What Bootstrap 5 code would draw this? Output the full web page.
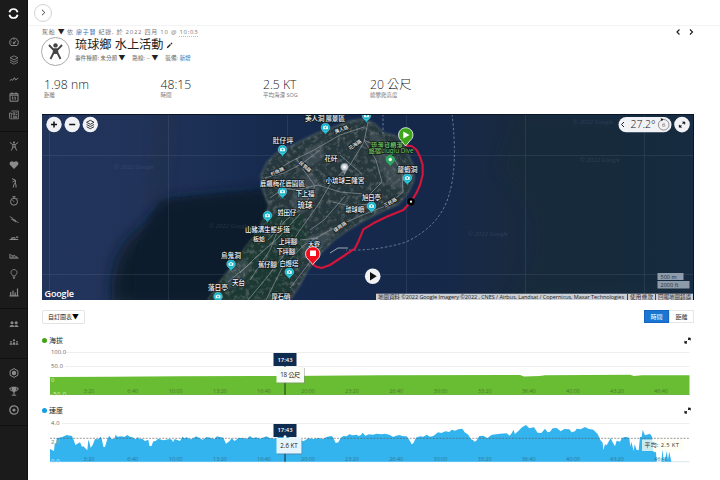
<!DOCTYPE html>
<html lang="zh-Hant">
<head>
<meta charset="utf-8">
<meta name="viewport" content="width=device-width, initial-scale=1">
<title>琉球鄉 水上活動</title>
<link href="https://cdn.jsdelivr.net/npm/bootstrap@5.3.0/dist/css/bootstrap.min.css" rel="stylesheet">
<style>
body{font-family:"Open Sans","Noto Sans CJK TC",sans-serif;font-size:6px;line-height:1;color:#333;width:720px;height:480px;overflow:hidden;background:#fff}
svg{display:block;flex:none}
svg text{font-family:"Open Sans","Noto Sans CJK TC",sans-serif}
.side{width:28px;height:480px;background:#1b1b1b;border-right:1px solid #111}
.side .brand{height:26px}
.side .grp{border-bottom:1px solid #101010;padding:5.5px 0 6.5px}
.side .first-grp{padding-top:7px}
.side .ico{height:18.25px}
.side svg{stroke:#8b8b8b;fill:none;stroke-width:1}
.side .solid{fill:#8b8b8b;stroke:none}
.topbar{height:26px;border-bottom:1px solid #f3f3f3;padding-left:6px}
.round-btn{width:18px;height:18px;border:1px solid #d4d4d4;border-radius:50%}
.body-col{padding:0 26px 0 14px}
.crumb{height:11px;color:#777;letter-spacing:.74px;white-space:nowrap}
.crumb u{text-decoration:none;border-bottom:1px dotted #bbb}
.crumb a,.meta a{color:#2f6db5;text-decoration:none}
.avatar{width:29px;height:29px;border:1px solid #aaa;border-radius:50%;margin-left:-1px}
.head{height:29px;gap:5px}
.head h1{font-size:12.2px;font-weight:400;line-height:16px;color:#222;margin:0;white-space:nowrap}
.meta{font-size:5.6px;color:#666;height:11px;gap:7px;white-space:nowrap}
.tri{font-size:6.8px;line-height:5px;color:#222;letter-spacing:0}
.stats{height:48px;padding:12px 0 0 2px}
.stat-v{font-size:12.2px;font-weight:300;line-height:13px;color:#222;white-space:nowrap}
.stat-l{font-size:5.5px;line-height:8px;color:#777}
.mapbox{height:186px;width:652px}
.tools{height:33px}
.pick{width:43px;height:14px;border:1px solid #e4e4e4;border-radius:2px;font-size:6px;color:#222}
.seg div{width:25px;height:13px;font-size:6px;border:1px solid #e6e6e6}
.seg .on{background:#1976d2;border-color:#1565c0;color:#fff}
.ttl{height:14px;font-size:7px;color:#222;padding-right:3px}
.dot{width:5px;height:5px;border-radius:50%;margin-right:2px}
.green{background:#43a316}.blue{background:#149fe2}
</style>
<script src="https://cdn.jsdelivr.net/npm/bootstrap@5.3.0/dist/js/bootstrap.bundle.min.js"></script>
</head>
<body>
<div class="d-flex">
<nav class="side flex-shrink-0">
  <div class="brand d-flex align-items-center justify-content-center"><svg width="11" height="11" viewBox="0 0 11 11" style="stroke:#fff;stroke-width:1.7"><path d="M1.4 4.3A4.2 4.2 0 0 1 9.6 4.3M1.4 6.7A4.2 4.2 0 0 0 9.6 6.7"/></svg></div>
  <div class="grp first-grp">
    <div class="ico d-flex align-items-center justify-content-center"><svg width="10" height="10" viewBox="0 0 10 10"><path d="M2 8.5A4.3 4.3 0 1 1 8 8.5ZM5 6.3L7 3.6M2.3 5H3M5 2.2V3"/><circle cx="5" cy="6" r=".8"/></svg></div>
    <div class="ico d-flex align-items-center justify-content-center"><svg width="10" height="10" viewBox="0 0 10 10" style="stroke-width:.8"><path d="M5 .8L9 2.8 5 4.8 1 2.8ZM1 5L5 7 9 5M1 7.1L5 9.2 9 7.1"/></svg></div>
    <div class="ico d-flex align-items-center justify-content-center"><svg width="10" height="10" viewBox="0 0 10 10"><path d="M.8 6.6L2.5 5.4 3.5 6.4 5.4 3.7 6.6 5.9 9.2 4.2"/></svg></div>
    <div class="ico d-flex align-items-center justify-content-center"><svg width="10" height="10" viewBox="0 0 10 10"><path d="M1 1.7H9V9.2H1ZM1 3.2H9M3 .3V2.5M7 .3V2.5M3.8 5V7.8M6.2 5V7.8M3 5H4M5.5 5H6.4"/></svg></div>
    <div class="ico d-flex align-items-center justify-content-center"><svg width="10" height="10" viewBox="0 0 10 10" style="stroke-width:.8"><path d="M2.3 1H9.4V8.8H1.5Q.5 8.8.5 7.8V3H2.3V8M4 2.8H5.8V4.7H4ZM6.7 2.8H8.3M6.7 4.5H8.3M4 6.2H8.3M4 7.4H8.3"/></svg></div>
  </div>
  <div class="grp">
    <div class="ico d-flex align-items-center justify-content-center"><svg width="10" height="10" viewBox="0 0 10 10"><circle cx="5" cy="1.6" r="1" class="solid"/><path d="M.8 1.4L3.4 3.4H6.6L9.2 1.4M3.9 3.5V6L2.3 9.5M6.1 3.5V6L7.7 9.5M4 6H6"/></svg></div>
    <div class="ico d-flex align-items-center justify-content-center"><svg width="10" height="10" viewBox="0 0 10 10"><path class="solid" d="M5 9L1.1 5.1C-.7 2.5 2.8-.4 5 2.3 7.2-.4 10.7 2.5 8.9 5.1Z"/></svg></div>
    <div class="ico d-flex align-items-center justify-content-center"><svg width="10" height="10" viewBox="0 0 10 10"><path d="M3 .7L6.5 2.2V4.500L5 6.500 4.200 9.500M6 4.500L7 7V9.500M6.200 2.500L3.500 4"/></svg></div>
    <div class="ico d-flex align-items-center justify-content-center"><svg width="10" height="10" viewBox="0 0 10 10"><circle cx="5" cy="5.700" r="3.500"/><path d="M3.500.7H6.500M5 .7V2M5 5.800L3.600 4.300M8 2.200L8.700 2.900"/></svg></div>
    <div class="ico d-flex align-items-center justify-content-center"><svg width="10" height="10" viewBox="0 0 10 10"><path d="M.8 2.500L4 4.500 6.200 7 9.500 8.600M3.500 5.500L7 6.500M2 4.800L7 8" style="stroke-width:.8"/></svg></div>
    <div class="ico d-flex align-items-center justify-content-center"><svg width="10" height="10" viewBox="0 0 10 10"><path d="M.6 6.500H9.200M2 5.400L5 4.600 6.500 5.500M7 4.200H9.200" style="stroke-width:1.200"/></svg></div>
    <div class="ico d-flex align-items-center justify-content-center"><svg width="10" height="10" viewBox="0 0 10 10"><path d="M.8 2.800V7.300H9.200Q9.400 6.200 7 5.700L5 4 3.500 5 1 3.500M1 6.200H8M3.500 4.500L4.500 6" style="stroke-width:.8"/></svg></div>
    <div class="ico d-flex align-items-center justify-content-center"><svg width="10" height="10" viewBox="0 0 10 10" style="stroke-width:.9"><path d="M3.700 7V6.300C.5 3.800 2.300.6 5 .6S9.500 3.800 6.300 6.300V7ZM3.900 8.300H6.100M4.200 9.400H5.800"/></svg></div>
    <div class="ico d-flex align-items-center justify-content-center"><svg width="10" height="10" viewBox="0 0 10 10"><path d="M.5 8.900H9.500M1.700 5V8.500M4 3.500V8.500M6.200 5.500V8.500M8.500 1.500V8.500" style="stroke-width:1.200"/></svg></div>
  </div>
  <div class="grp">
    <div class="ico d-flex align-items-center justify-content-center"><svg width="10" height="10" viewBox="0 0 10 10"><g class="solid"><circle cx="3" cy="3.800" r="1.500"/><circle cx="7.200" cy="3.800" r="1.500"/><path d="M.4 8Q.5 5.900 3 5.900T4.900 8ZM5.300 8Q5.200 5.900 7.200 5.900T9.600 8Z"/></g></svg></div>
    <div class="ico d-flex align-items-center justify-content-center"><svg width="10" height="10" viewBox="0 0 10 10"><g class="solid"><circle cx="5" cy="3.300" r="1.100"/><circle cx="2" cy="4.800" r=".9"/><circle cx="8" cy="4.800" r=".9"/><path d="M.5 7.800Q.6 6 2 6T3.300 7.800ZM3.600 7.800Q3.500 5 5 5T6.400 7.800ZM6.700 7.800Q6.600 6 8 6T9.500 7.800Z"/></g></svg></div>
  </div>
  <div class="grp">
    <div class="ico d-flex align-items-center justify-content-center"><svg width="10" height="10" viewBox="0 0 10 10"><path d="M5 .6L8.900 2.800V7.200L5 9.400 1.100 7.200V2.800Z"/><circle cx="5" cy="5" r="2.200" class="solid"/></svg></div>
    <div class="ico d-flex align-items-center justify-content-center"><svg width="10" height="10" viewBox="0 0 10 10"><path d="M2.500 2H.8Q.8 4.800 3.200 5M7.500 2H9.200Q9.200 4.800 6.800 5M5 5V9M2.800 9.200H7.200"/><path class="solid" d="M2.500.7H7.500Q7.500 6 5 6.400 2.500 6 2.500.7Z"/></svg></div>
    <div class="ico d-flex align-items-center justify-content-center"><svg width="10" height="10" viewBox="0 0 10 10" style="stroke-width:1.300"><circle cx="5" cy="5" r="4.200"/><circle cx="5" cy="5" r="1.600" class="solid"/></svg></div>
  </div>
</nav>

<main class="flex-grow-1">
  <div class="topbar d-flex align-items-center"><div class="round-btn d-flex align-items-center justify-content-center"><svg width="5" height="7" viewBox="0 0 5 7"><path d="M1 .8L3.800 3.500 1 6.200" fill="none" stroke="#444"/></svg></div></div>
  <div class="body-col">
    <div class="crumb d-flex align-items-center justify-content-between">
      <div>駕船 <span class="tri">▼</span> 依 <a href="#">廖子賢</a> 紀錄, 於 2022 四月 10 @ <u>10:03</u></div>
      <svg width="18" height="8" viewBox="0 0 18 8"><path d="M3.500 1.500L1 4 3.500 6.500M14 1.500L16.500 4 14 6.500" fill="none" stroke="#222" stroke-width="1.200"/></svg>
    </div>
    <div class="head d-flex">
      <div class="avatar d-flex align-items-center justify-content-center flex-shrink-0"><svg width="19" height="20" viewBox="0 0 19 20"><circle cx="9.500" cy="3.400" r="2.200" fill="#444"/><path d="M3 3L7 7.300H12L16 3M8 8L7.500 11 4.500 17M11 8L11.500 11 14.500 17" fill="none" stroke="#444" stroke-width="1.900"/><path d="M7 7H12V12H7Z" fill="#444"/></svg></div>
      <div>
        <h1 class="d-flex align-items-center">琉球鄉 水上活動<svg width="7" height="7" viewBox="0 0 7 7" style="margin-left:3px"><path d="M1.200 5.800L4.500 2.500M5 2L6 1" stroke="#222" stroke-width="1.400"/></svg></h1>
        <div class="meta d-flex align-items-center"><span>事件種類: 未分類 <span class="tri">▼</span></span><span>路線: -- <span class="tri">▼</span></span><span>裝備: <a href="#">新增</a></span></div>
      </div>
    </div>
    <div class="stats d-flex">
      <div style="width:116.500px"><div class="stat-v">1.98 nm</div><div class="stat-l">距離</div></div>
      <div style="width:102.500px"><div class="stat-v">48:15</div><div class="stat-l">時間</div></div>
      <div style="width:107px"><div class="stat-v">2.5 KT</div><div class="stat-l">平均海浬 SOG</div></div>
      <div><div class="stat-v">20 公尺</div><div class="stat-l">總攀爬高度</div></div>
    </div>

    <div class="mapbox">
    <svg width="652" height="186" viewBox="42 114 652 186">
      <defs>
        <linearGradient id="sea"><stop offset="0" stop-color="#21345a"/><stop offset=".15" stop-color="#22335a"/><stop offset=".35" stop-color="#162a4e"/><stop offset=".6" stop-color="#15284a"/><stop offset=".72" stop-color="#192a40"/><stop offset="1" stop-color="#182d4b"/></linearGradient>
        <filter id="soft" x="-30%" y="-30%" width="160%" height="160%"><feGaussianBlur stdDeviation="7"/></filter>
        <filter id="edge"><feGaussianBlur stdDeviation=".8"/></filter>
        <filter id="grain" x="0" y="0" width="100%" height="100%" color-interpolation-filters="sRGB"><feTurbulence type="fractalNoise" baseFrequency=".22" numOctaves="3" seed="8"/><feColorMatrix values="0 0 0 0 .52  0 0 0 0 .54  0 0 0 0 .55  2.6 0 0 0 -1.25"/></filter>
        <clipPath id="land"><path d="M208 300L222 279 236 261 246 247 257 233 264 219 269 206 262 188 261 175 267 162 279 151 295 144 313 135 331 128 350 121 364 119 375 124 384 133 396 136 406 150 413 165 414 180 408 193 399 204 383 211 363 221 345 232 333 241 320 254 309 268 300 285 290 300Z"/></clipPath>
        <g id="cam"><path d="M0 7L-2.800 3H2.800Z" fill="#12b5cb"/><circle r="4.300" fill="#12b5cb" stroke="#b8eef4" stroke-width=".4"/><path d="M-2.400-1.300H-1L-.5-2H.5L1-1.300H2.400V1.800H-2.400Z" fill="#fff"/><circle r=".9" fill="#12b5cb"/></g>
      </defs>
      <rect x="42" y="114" width="652" height="186" fill="url(#sea)"/>
      <path d="M165 200L280 190 275 235 215 305H112Q108 262 132 236 150 222 165 200Z" fill="#0e1d29" filter="url(#soft)"/>
      <path d="M160 201L262 190V240L215 300H135Q128 250 160 201Z" fill="#0e1f2f" opacity=".6" filter="url(#edge)"/>
      <path d="M160 110H174L160 205H150Z" fill="#223044" filter="url(#soft)" opacity=".6"/>
      <path d="M515 114H694V300H510Q560 230 500 170Z" fill="#192938" filter="url(#soft)" opacity=".65"/>
      <g stroke="#9db2cd" stroke-width=".6" opacity=".2"><path d="M49.500 114V300M168.500 114V300M287.500 114V300M406.500 114V300M525.500 114V300M644.500 114V300M42 155.500H694M42 274.500H694"/></g>
      <path d="M208 300L222 279 236 261 246 247 257 233 264 219 269 206 262 188 261 175 267 162 279 151 295 144 313 135 331 128 350 121 364 119 375 124 384 133 396 136 406 150 413 165 414 180 408 193 399 204 383 211 363 221 345 232 333 241 320 254 309 268 300 285 290 300Z" fill="#26393d" stroke="#5b6a6c" stroke-width="1" filter="url(#edge)"/>
      <g clip-path="url(#land)">
        <path d="M258 220L300 210 310 240 285 300H205Z" fill="#1d3833" filter="url(#edge)"/>
        <g fill="#59626a" opacity=".45" filter="url(#edge)"><path d="M296 180L312 172 322 185 310 208 300 215 290 204ZM368 128L385 140 402 168 404 190 388 185 375 155ZM303 240L340 224 328 242 300 262ZM224 270L245 258 252 268 240 285 226 290ZM305 150L325 140 322 160 300 173Z"/></g>
        <rect x="205" y="114" width="215" height="186" filter="url(#grain)" opacity=".55"/>
        <g fill="none" stroke="#9299a0" stroke-width=".9" opacity=".75" stroke-linejoin="round"><path d="M368 122L364 142 350 165 331 183 318 205 300 230 286 252 268 276 248 300M364 140L390 152 402 172 403 192 388 205 360 216 332 229 304 245 282 268 266 300M270 174L290 162 314 150 340 135 364 127M265 178L284 173 303 163 320 150M296 158L305 172 315 186 304 207 286 220 268 240M270 198L284 188 296 190 318 185 340 192 364 194M364 140L376 160 382 182 370 194M240 273L255 258 278 238 300 214M228 282L252 262M333 202L350 206 370 204M300 240L318 238M310 262L290 288M282 220L270 250 250 280M340 155L362 174M310 230L324 220 345 196"/></g>
      </g>
      <path d="M330 253L338 248H348" fill="none" stroke="#a0a8ae" stroke-width="1"/>
      <path d="M383 114V134M452 114Q458 165 449 195 440 226 406 242 378 251 346 250" fill="none" stroke="#71829e" stroke-width=".9" stroke-dasharray="2.500 2"/>
      <g font-size="6" fill="#7d92b0" opacity=".2" font-style="italic"><text x="114" y="169">© 2022 Google</text><text x="209" y="228">© 2022 Google</text><text x="573" y="124">© 2022 Google</text><text x="580" y="162">© 2022 Google</text><text x="468" y="236">© 2022 Google</text></g>
      <use href="#cam" x="366.500" y="115.500"/><use href="#cam" x="325.500" y="127.500"/><use href="#cam" x="282.500" y="149.500"/><use href="#cam" x="282.500" y="191.500"/><use href="#cam" x="267.500" y="215.500"/><use href="#cam" x="371.500" y="206"/><use href="#cam" x="407.300" y="178"/><use href="#cam" x="289.300" y="272"/><use href="#cam" x="231" y="264"/><use href="#cam" x="218" y="296.500"/>
      <path d="M344.500 175L342 170H347Z" fill="#87949b"/><circle cx="344.500" cy="167" r="3.800" fill="#c8d3d8" stroke="#778" stroke-width=".7"/><circle cx="344.500" cy="167" r="1.400" fill="#fff"/>
      <path d="M390.300 166L386.500 162A4.500 4.500 0 1 1 394 162Z" fill="#2da660"/><circle cx="390.300" cy="159.500" r="1.700" fill="#fff"/>
      <g font-size="6.800" font-weight="500" fill="#f4f4f4" stroke="#121a1c" stroke-width="1.500" paint-order="stroke" text-anchor="middle">
        <text x="325" y="121" textLength="40">美人洞 風景區</text><text x="283" y="143">肚仔坪</text><text x="331" y="161" textLength="13">花矸</text><text x="282.500" y="185.500" textLength="45">鹿飆梅花鹿園區</text><text x="305" y="196" textLength="19">下上福</text><text x="345" y="183" textLength="39">小琉球三隆宮</text><text x="305" y="208" font-size="7.500">琉球</text><text x="287" y="215" textLength="19">姓田仔</text><text x="267.500" y="231.500" textLength="45">山豬溝生態步道</text><text x="259" y="241" font-size="6">板蛤</text><text x="288" y="244" textLength="19">上坪腳</text><text x="286" y="254" textLength="19">下坪腳</text><text x="267.500" y="267" textLength="19">蕉仔腳</text><text x="289" y="265.500" textLength="19">白燈塔</text><text x="314" y="245.500" font-size="6">大寮</text><text x="281" y="299" textLength="19">厚石硝</text><text x="371.500" y="199.500" textLength="19">旭日亭</text><text x="355" y="212" textLength="19">琉球嶼</text><text x="407.500" y="172" textLength="20">龍蝦洞</text><text x="231" y="258" textLength="20">烏鬼洞</text><text x="218" y="290" textLength="20">落日亭</text><text x="238.500" y="285" textLength="13">天台</text>
        <g fill="#6fd267" font-size="6.200"><text x="387" y="146.500" textLength="32">琉溜貨櫃溜</text><text x="391" y="153.300" textLength="45" lengthAdjust="spacingAndGlyphs">旅宿Liuqiu Dive</text></g>
        <g font-size="4.800"><text transform="translate(342 131) rotate(-20)">美人路</text><text transform="translate(356 146) rotate(-35)">花海路</text><text transform="translate(278 173) rotate(-25)">杉板路</text><text transform="translate(304 168) rotate(40)">民族路</text><text transform="translate(341 228) rotate(-35)">復興路</text><text transform="translate(391 204) rotate(-30)">三民路</text></g>
      </g>
      <path transform="translate(240 110) scale(.33333)" d="M498 107L515 108 530 120 540 140 548 165 548 195 540 225 530 248 513 275 490 300 440 320 400 340 370 358 355 395 345 415 320 432 270 465 245 474 228 470 217 462" fill="none" stroke="#d31539" stroke-width="6.500" stroke-linejoin="round"/>
      <circle cx="411" cy="201.700" r="3.700" fill="#000"/><circle cx="411" cy="201.700" r="1.100" fill="#fff"/>
      <path d="M405.500 146L399.500 138.500A7.200 7.200 0 1 1 412 138.500Z" fill="#3da51c" stroke="#fff" stroke-width=".8"/><path d="M403.300 131.500L409.500 135 403.300 138.500Z" fill="#fff"/>
      <path d="M312.700 264.500L306.500 257.500A7.200 7.200 0 1 1 319 257.500Z" fill="#f20d1d" stroke="#fff" stroke-width=".8"/><rect x="310" y="250.500" width="6" height="5.500" fill="#fff"/>
      <circle cx="372.700" cy="276.200" r="7.800" fill="#f1f2f3"/><path d="M370 272L376.700 276.200 370 280.400Z" fill="#111"/>
      <g fill="#f1f2f5"><circle cx="54" cy="124.500" r="7.700"/><circle cx="72.200" cy="124.500" r="7.700"/><circle cx="90.300" cy="124.500" r="7.700"/><rect x="618.500" y="117" width="53" height="15.300" rx="7.650"/><circle cx="682" cy="124.600" r="7.800"/></g>
      <path d="M51 124.500H57M54 121.500V127.500M69.200 124.500H75.200" stroke="#111" stroke-width="1.500"/>
      <path d="M90.300 120.300L94 122.300 90.300 124.300 86.600 122.300ZM86.600 124.500L90.300 126.500 94 124.500M86.600 126.700L90.300 128.700 94 126.700" fill="none" stroke="#222" stroke-width=".9"/>
      <path d="M624 122L621.500 124.500 624 127" fill="none" stroke="#222"/><text x="630.500" y="128.400" font-size="10.500" font-weight="300" fill="#111" textLength="25">27.2°</text>
      <circle cx="663.700" cy="124.800" r="5.300" fill="none" stroke="#777" stroke-width=".8"/><text x="662" y="127" font-size="6" fill="#555">6</text><path d="M660.500 118.300L663.500 119 661.700 121.200Z" fill="#111"/>
      <g id="expand"><path d="M680 126.500L684 122.500" stroke="#111" stroke-width="1" stroke-dasharray="2 1.500"/><path d="M682.600 122H684.800V124.200ZM679.300 125V127.200H681.500Z" fill="#111" stroke="#111" stroke-width=".7"/></g>
      <g fill="#8d9bab"><rect x="657.500" y="273" width="26" height="7"/><rect x="657.500" y="281" width="32" height="7.500"/></g><g font-size="5.500" fill="#27323f"><text x="660.500" y="278.600" textLength="16">500 m</text><text x="660.500" y="287" textLength="18">2000 ft</text></g>
      <text x="44.500" y="297" font-size="9" font-weight="600" fill="#fff" textLength="29.500">Google</text>
      <rect x="376" y="293.700" width="318" height="6.300" fill="#cbd0d6"/>
      <g font-size="5.500" fill="#222"><text x="378" y="298.900" textLength="246">地圖資料 ©2022 Google Imagery ©2022 , CNES / Airbus, Landsat / Copernicus, Maxar Technologies</text><text x="630" y="298.900" textLength="23">使用條款</text><text x="658" y="298.900" textLength="33">回報地圖錯誤</text></g><path d="M627.500 294V300M655.500 294V300" stroke="#222" stroke-width=".8"/>
      <path d="M42 114.500H693.500V300" fill="none" stroke="#091426"/>
    </svg>
    </div>

    <div class="tools d-flex align-items-center justify-content-between">
      <div class="pick d-flex align-items-center justify-content-center">自訂圖表<span class="tri text-black">▼</span></div>
      <div class="seg d-flex"><div class="on d-flex align-items-center justify-content-center">時間</div><div class="d-flex align-items-center justify-content-center">距離</div></div>
    </div>

    <div class="ttl d-flex align-items-center"><span class="dot green"></span>海拔<svg class="ms-auto" width="7" height="7" viewBox="678.500 121 7 7"><use href="#expand"/></svg></div>
    <svg width="652" height="56" viewBox="42 347 652 56">
      <path d="M65 352.500H689.500M65 366.500H689.500" stroke="#eee"/>
      <path d="M50 377L110 376.800 180 376.300 285 376 380 375.300 520 375 524 376.600 540 376 545 375.300 630 374.700 634 376 642 375.300H689.500V394.800H50Z" fill="#69bd32"/><path d="M50 394.500H689.500" stroke="#57a52a" stroke-width=".6"/>
      <path d="M285 366V394.800" stroke="#173a16"/>
      <g font-size="5.800" fill="#666"><text x="51" y="354.200" textLength="15">100.0</text><text x="51" y="368" textLength="12">50.0</text><g fill="#d8efc8"><text x="51" y="382">0</text><text x="51" y="395.500" textLength="15">-50.0</text></g></g>
      <g font-size="5.500" fill="#4a7a30" text-anchor="middle"><text x="89" y="393">3:20</text><text x="132.800" y="393">6:40</text><text x="175.700" y="393">10:00</text><text x="220" y="393">13:20</text><text x="264" y="393">16:40</text><text x="308" y="393">20:00</text><text x="352" y="393">23:20</text><text x="396.200" y="393">26:40</text><text x="440.500" y="393">30:00</text><text x="484.700" y="393">33:20</text><text x="528.700" y="393">36:40</text><text x="573" y="393">40:00</text><text x="617" y="393">43:20</text><text x="661" y="393">46:40</text></g>
      <rect x="273.500" y="353" width="23" height="13" fill="#0e2c4f"/><text x="285" y="361.500" font-size="5.800" font-weight="600" fill="#fff" text-anchor="middle" textLength="15">17:43</text>
      <rect x="277.300" y="368" width="27.600" height="15.500" fill="#888" opacity=".5"/><rect x="276.500" y="367" width="27.500" height="15.500" fill="#f8fbf6"/><text x="290.300" y="377.300" font-size="6.200" fill="#222" text-anchor="middle" textLength="20">18 公尺</text>
    </svg>
    <div class="ttl d-flex align-items-center"><span class="dot blue"></span>速度<svg class="ms-auto" width="7" height="7" viewBox="678.500 121 7 7"><use href="#expand"/></svg></div>
    <svg width="652" height="51" viewBox="42 417 652 51">
      <path d="M62 423.500H689.500" stroke="#eee"/><path d="M50 461.700H689.500" stroke="#c9dbe8" stroke-width=".7"/>
      <path transform="translate(30 305) scale(.33333)" fill="#34b4ef" d="M60 470V432L72 438 74 418 79 414 80 400 95 397 110 390 126 393 133 410 136 420 150 412 156 425 160 424 172 436 175 405 177 408 182 428 188 420 195 402 204 403 212 395 216 405 220 425 225 426 232 402 238 392 244 402 253 402 257 389 262 395 275 394 283 396 288 392 293 390 299 395 305 396 312 400 318 403 324 396 328 403 336 401 345 408 355 404 358 422 364 424 370 409 377 408 384 401 400 406 418 402 426 404 429 412 434 402 450 408 457 395 463 400 470 397 481 403 490 400 498 394 507 398 517 404 531 396 540 398 553 402 561 394 570 396 580 398 588 416 598 409 605 400 614 408 625 399 640 399 650 402 660 393 668 400 678 397 690 401 710 394 718 399 735 401 748 395 765 391 780 399 800 402 820 409 835 400 850 402 866 399 878 402 892 395 905 393 910 398 917 414 925 412 932 399 940 393 950 394 958 388 968 391 980 389 986 393 992 391 998 383 1006 392 1017 388 1029 389 1040 386 1055 388 1065 386 1078 389 1090 396 1096 393 1108 390 1120 394 1130 394 1140 408 1145 418 1150 415 1158 398 1170 394 1180 395 1190 389 1200 395 1210 393 1224 382 1234 384 1246 379 1258 381 1265 374 1275 377 1285 373 1297 371 1304 382 1315 389 1322 402 1329 405 1333 410 1339 407 1348 393 1360 392 1372 400 1380 393 1386 389 1410 386 1430 385 1439 392 1446 383 1450 374 1455 387 1465 378 1476 367 1488 360 1498 370 1512 367 1523 383 1534 384 1545 371 1553 382 1560 380 1568 370 1580 369 1592 379 1603 372 1618 373 1625 382 1635 379 1640 371 1652 373 1665 366 1675 371 1690 374 1703 387 1711 405 1718 413 1720 435 1725 418 1730 421 1742 399 1748 412 1755 424 1760 407 1770 410 1776 399 1785 396 1791 396 1798 400 1801 425 1804 410 1811 438 1814 418 1820 435 1826 436 1830 396 1835 396 1838 375 1845 391 1860 386 1866 395 1868 415 1870 440 1878 442 1880 470 1894 470 1898 430 1900 465 1903 470 1911 437 1913 468 1918 440 1924 470Z"/>
      <path d="M50 438.300H689.500" stroke="#555" stroke-width=".6" stroke-dasharray="2 1.300"/>
      <path d="M285 437V461.700" stroke="#123"/>
      <g font-size="5.800" fill="#666"><text x="51" y="424.800" textLength="8.500">4.0</text><text x="51" y="444.300" textLength="8.500" fill="#a7cfe2" stroke="#777" stroke-width=".2">2.0</text><text x="51" y="463" textLength="8.500" fill="#c4e8f8">0.0</text></g>
      <g font-size="5.500" fill="#2f7492" text-anchor="middle"><text x="89" y="460.500">3:20</text><text x="132.800" y="460.500">6:40</text><text x="175.700" y="460.500">10:00</text><text x="220" y="460.500">13:20</text><text x="264" y="460.500">16:40</text><text x="308" y="460.500">20:00</text><text x="352" y="460.500">23:20</text><text x="396.200" y="460.500">26:40</text><text x="440.500" y="460.500">30:00</text><text x="484.700" y="460.500">33:20</text><text x="528.700" y="460.500">36:40</text><text x="573" y="460.500">40:00</text><text x="617" y="460.500">43:20</text><text x="661" y="460.500">46:40</text></g>
      <rect x="273.500" y="424" width="23" height="13" fill="#0e2c4f"/><text x="285" y="432.300" font-size="5.800" font-weight="600" fill="#fff" text-anchor="middle" textLength="15">17:43</text>
      <circle cx="285" cy="436.700" r="1.500" fill="#fff"/>
      <rect x="277.300" y="439" width="25" height="15.500" fill="#567" opacity=".5"/><rect x="276.500" y="438" width="25" height="15.500" fill="#e6f5fd"/><text x="289" y="448" font-size="6.200" fill="#222" text-anchor="middle" textLength="17.500">2.6 KT</text>
      <rect x="642" y="439.500" width="41" height="11.500" fill="#fdfdf0" opacity=".75"/><text x="644.500" y="447.200" font-size="5.800" fill="#333" textLength="34.500">平均:  2.5 KT</text>
    </svg>
  </div>
</main>
</div>
</body>
</html>
